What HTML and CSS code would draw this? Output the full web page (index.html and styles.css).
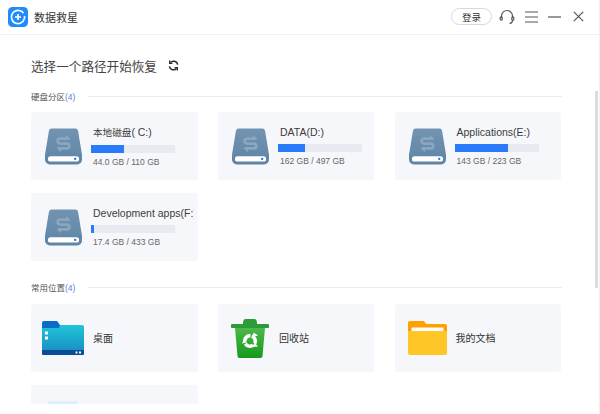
FILE: index.html
```html
<!DOCTYPE html>
<html lang="zh">
<head>
<meta charset="utf-8">
<title>数据救星</title>
<link rel="stylesheet" href="styles.css">
</head>
<body>
<div class="window">
  <header class="titlebar">
    <svg class="logo" viewBox="0 0 20 20" width="20" height="20">
      <rect width="20" height="20" rx="4.5" fill="#1e8cfa"/>
      <circle cx="10" cy="10" r="6.6" fill="none" stroke="#fff" stroke-width="1.7" stroke-dasharray="35 3 3 3" transform="rotate(20 10 10)"/>
      <path d="M10 7v6M7 10h6" stroke="#fff" stroke-width="1.7" fill="none"/>
    </svg>
    <span class="app-name">数据救星</span>
    <div class="spacer"></div>
    <button class="login">登录</button>
    <svg class="tb-icon" viewBox="0 0 16 16" width="16" height="16" fill="none" stroke="#555" stroke-width="1.2">
      <path d="M2.5 9V7a5.5 5.5 0 0 1 11 0v2"/>
      <rect x="1.2" y="7.8" width="2" height="3.4" rx="1"/>
      <rect x="12.8" y="7.8" width="2" height="3.4" rx="1"/>
      <path d="M13.6 11.2c0 2-1.2 3-3 3.4"/>
    </svg>
    <svg class="tb-icon menu" viewBox="0 0 13 12" width="13" height="12" fill="none" stroke="#555" stroke-width="1.2">
      <path d="M0 1h13M0 6h13M0 11h13"/>
    </svg>
    <svg class="tb-icon min" viewBox="0 0 13 12" width="13" height="12" fill="none" stroke="#555" stroke-width="1.2">
      <path d="M0 6h13"/>
    </svg>
    <svg class="tb-icon close" viewBox="0 0 11 11" width="11" height="11" fill="none" stroke="#555" stroke-width="1.2">
      <path d="M.8.8l9.4 9.4M10.2.8L.8 10.2"/>
    </svg>
  </header>

  <main class="content">
    <div class="heading">
      <span>选择一个路径开始恢复</span>
      <svg viewBox="0 0 12 12" width="11" height="11" fill="none" stroke="#2b2b2b" stroke-width="1.7">
        <path d="M10.6 5A4.7 4.700 0 0 0 2.600 2.800"/>
        <path d="M1.400 7a4.700 4.700 0 0 0 8 2.200"/>
        <path d="M1.800 .6v3h3" stroke-width="1.400"/>
        <path d="M10.200 11.400v-3h-3" stroke-width="1.400"/>
      </svg>
    </div>

    <section class="section disks">
      <div class="section-head"><span class="label">硬盘分区<em>(4)</em></span><i class="rule"></i></div>
      <div class="grid">
        <div class="card">
          <svg class="drive"><use href="#hdd"/></svg>
          <div class="info">
            <div class="name"><span class="cjk">本地磁盘</span>( C:)</div>
            <div class="bar"><div class="fill" style="width:39%"></div></div>
            <div class="size">44.0 GB / 110 GB</div>
          </div>
        </div>
        <div class="card">
          <svg class="drive"><use href="#hdd"/></svg>
          <div class="info">
            <div class="name">DATA(D:)</div>
            <div class="bar"><div class="fill" style="width:32%"></div></div>
            <div class="size">162 GB / 497 GB</div>
          </div>
        </div>
        <div class="card">
          <svg class="drive"><use href="#hdd"/></svg>
          <div class="info">
            <div class="name">Applications(E:)</div>
            <div class="bar"><div class="fill" style="width:64%"></div></div>
            <div class="size">143 GB / 223 GB</div>
          </div>
        </div>
        <div class="card">
          <svg class="drive"><use href="#hdd"/></svg>
          <div class="info">
            <div class="name">Development apps(F:)</div>
            <div class="bar"><div class="fill" style="width:3.500%"></div></div>
            <div class="size">17.4 GB / 433 GB</div>
          </div>
        </div>
      </div>
    </section>

    <section class="section places">
      <div class="section-head"><span class="label">常用位置<em>(4)</em></span><i class="rule"></i></div>
      <div class="grid">
        <div class="card place">
          <svg class="place-icon" viewBox="0 0 42 34" width="42" height="34">
            <defs>
              <linearGradient id="desk" x1="0" y1="0" x2="0" y2="1"><stop offset="0" stop-color="#1fc6d8"/><stop offset="1" stop-color="#1a8fc4"/></linearGradient>
            </defs>
            <path d="M0 2a2 2 0 0 1 2-2h13l3 4v4H0z" fill="#0a6cc8"/>
            <path d="M0 7h17l1-3h22a2 2 0 0 1 2 2v24H0z" fill="url(#desk)"/>
            <path d="M0 29h42v4a1 1 0 0 1-1 1H1a1 1 0 0 1-1-1z" fill="#0a4d96"/>
            <rect x="3" y="10.500" width="3" height="3" fill="#fff"/>
            <rect x="3" y="15.500" width="3" height="3" fill="#fff"/>
            <rect x="33.500" y="30.500" width="2" height="2" fill="#fff"/>
            <rect x="37" y="30.500" width="2" height="2" fill="#fff"/>
          </svg>
          <span class="place-name">桌面</span>
        </div>
        <div class="card place">
          <svg class="place-icon bin" viewBox="0 0 38 39" width="38" height="39">
            <defs>
              <linearGradient id="binb" x1="0" y1="0" x2="0" y2="1"><stop offset="0" stop-color="#4db84a"/><stop offset="1" stop-color="#159a1c"/></linearGradient>
            </defs>
            <path d="M12 5c0-4 1-5 3-5h8c2 0 3 1 3 5h10.500a2 2 0 0 1 0 4H1.500a2 2 0 0 1 0-4z" fill="#2f9a38"/>
            <path d="M4 9h30l-2.500 28a2 2 0 0 1-2 2H8.500a2 2 0 0 1-2-2z" fill="url(#binb)"/>
            <circle cx="19" cy="22" r="5.200" fill="none" stroke="#fff" stroke-width="3.600" stroke-dasharray="8.600 2.300" transform="rotate(-70 19 22)"/>
            <path d="M22.500 13.500l4.500 3-5 1.500zM27 27.500l-5.500.5 2-4.500zM11 24.500l2-5 3 4z" fill="#fff"/>
          </svg>
          <span class="place-name">回收站</span>
        </div>
        <div class="card place">
          <svg class="place-icon folder" viewBox="0 0 39 34" width="39" height="34">
            <path d="M0 2a2 2 0 0 1 2-2h14l2 3h19a2 2 0 0 1 2 2v8H0z" fill="#ff9f00"/>
            <rect x="3.500" y="6.500" width="32" height="6" rx="1" fill="#fff"/>
            <path d="M0 10h39v22a2 2 0 0 1-2 2H2a2 2 0 0 1-2-2z" fill="#ffc627"/>
          </svg>
          <span class="place-name">我的文档</span>
        </div>
        <div class="card place">
          <svg class="place-icon" viewBox="0 0 30 34" width="30" height="34"><rect width="30" height="34" rx="1" fill="#dff0fd"/></svg>
        </div>
      </div>
    </section>
  </main>
  <div class="footer"></div>
  <div class="scrollbar"></div>
</div>

<svg class="defs" width="0" height="0">
  <defs>
    <linearGradient id="hg" x1="0" y1="0" x2="0" y2="1"><stop offset="0" stop-color="#7294b2"/><stop offset="1" stop-color="#5f84a4"/></linearGradient>
    <symbol id="hdd" viewBox="0 0 38 37">
      <path d="M7 0h24a3 3 0 0 1 3 2.500L38 27v5a5 5 0 0 1-5 5H5a5 5 0 0 1-5-5v-5L4 2.500A3 3 0 0 1 7 0z" fill="url(#hg)"/>
      <rect x="3" y="28.500" width="32" height="5.500" rx="2.700" fill="#fff"/>
      <circle cx="31" cy="31.200" r="1.200" fill="#1d72ef"/>
      <path d="M25 10.500H15.500a2.500 2.500 0 0 0 0 5h7a2.500 2.500 0 0 1 0 5H13" fill="none" stroke="#8ba6bf" stroke-width="2.800"/>
      <path d="M21.500 6.500l4.500 4.500h-4.500zM16.500 24.500L12 20h4.500z" fill="#8ba6bf"/>
    </symbol>
  </defs>
</svg>
</body>
</html>
```
FILE: styles.css
```css
* { box-sizing: border-box; }
html, body { margin: 0; padding: 0; }
body {
  width: 600px;
  height: 414px;
  overflow: hidden;
  background: #fff;
  font-family: "Liberation Sans", "Noto Sans CJK SC", sans-serif;
}
.window {
  position: relative;
  width: 600px;
  height: 414px;
  display: flex;
  flex-direction: column;
  overflow: hidden;
  border-right: 1px solid #f2f2f2;
}
.titlebar {
  flex: none;
  height: 35px;
  display: flex;
  align-items: center;
  padding: 0 15px 1px 8px;
  border-bottom: 1px solid #f0f0f2;
}
.logo { flex: none; }
.app-name { margin-left: 6px; font-size: 11px; color: #333; }
.spacer { flex: 1; }
.login {
  width: 41px;
  height: 17px;
  padding: 0;
  border: 1px solid #d9d9d9;
  border-radius: 9px;
  background: #fff;
  font: 9.500px "Liberation Sans", "Noto Sans CJK SC", sans-serif;
  color: #333;
}
.tb-icon { flex: none; }
.login + .tb-icon { margin-left: 7px; }
.menu { margin-left: 10px; }
.min { margin-left: 10px; }
.close { margin-left: 12px; }

.content {
  flex: none;
  height: 369px;
  overflow: hidden;
  padding: 0 37px 0 31px;
}
.heading {
  height: 16px;
  margin-top: 22px;
  display: flex;
  align-items: center;
  gap: 11px;
  font-size: 12.600px;
  color: #444;
}
.section-head {
  display: flex;
  align-items: center;
  gap: 13px;
  height: 12px;
}
.disks { margin-top: 17px; }
.places { margin-top: 20px; }
.label { font-size: 8.500px; color: #555; }
.label em { font-style: normal; color: #5a7fd6; }
.rule { flex: 1; height: 1px; background: #ebebee; }
.grid {
  display: grid;
  grid-template-columns: 166.500px 156px 166.500px;
  column-gap: 20.500px;
  row-gap: 13px;
  margin-top: 10px;
}
.places .grid { margin-top: 11px; }
.card {
  height: 68px;
  min-width: 0;
  overflow: hidden;
  display: flex;
  align-items: center;
  background: #f6f7fb;
  border-radius: 3px;
  padding: 0 4px 0 14px;
}
.drive { flex: none; width: 37px; height: 37px; }
.info { margin-left: 9px; min-width: 0; flex: 1; white-space: nowrap; overflow: hidden; }
.name { font-size: 10.500px; line-height: 14px; color: #3c3c3c; padding-left: 2px; }
.cjk { font-size: 9.600px; }
.bar { width: 84px; height: 8px; margin-top: 5px; background: #e8eaf1; }
.fill { height: 100%; background: #2a7bfa; }
.size { font-size: 8.500px; line-height: 12px; margin-top: 3px; color: #666; padding-left: 2px; }

.place { padding-left: 11px; }
.place-icon { flex: none; }
.place-name { margin: 0 0 2px 9px; font-size: 10px; color: #333; }
.bin { margin-left: 2px; }
.bin + .place-name { margin-left: 10px; }
.folder { margin-left: 2px; }
.place:nth-child(4) { align-items: flex-start; padding: 16px 0 0 17px; }

.footer { flex: 1; background: #fff; position: relative; }
.scrollbar {
  position: absolute;
  right: 1px;
  top: 91px;
  width: 3px;
  height: 197px;
  background: #dcdcdc;
}
.defs { position: absolute; }
```
